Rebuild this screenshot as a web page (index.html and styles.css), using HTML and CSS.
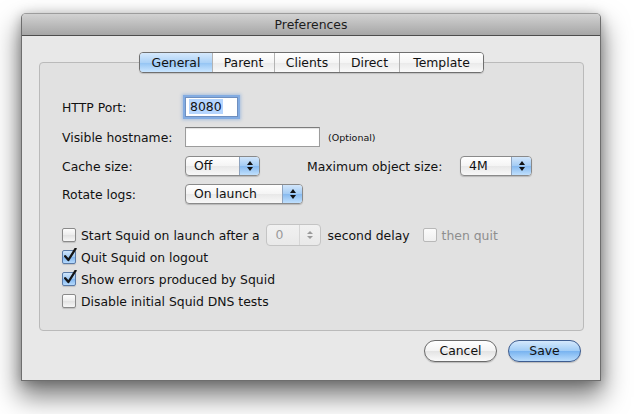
FILE: index.html
```html
<!DOCTYPE html>
<html>
<head>
<meta charset="utf-8">
<link rel="stylesheet" href="styles.css">
</head>
<body>
<div class="desk">
<div class="window">
  <div class="titlebar">Preferences</div>
  <div class="content">
    <div class="tabs">
      <div class="seg">
        <div class="tab sel t1">General</div>
        <div class="tab t2">Parent</div>
        <div class="tab t3">Clients</div>
        <div class="tab t4">Direct</div>
        <div class="tab t5">Template</div>
      </div>
    </div>
    <div class="group">
      <div class="form">
        <div class="row r1">
          <span class="lbl">HTTP Port:</span>
          <div class="field port"><span class="hl">8080</span></div>
        </div>
        <div class="row r2">
          <span class="lbl">Visible hostname:</span>
          <div class="field host"></div>
          <span class="opt">(Optional)</span>
        </div>
        <div class="row r3">
          <span class="lbl">Cache size:</span>
          <div class="popup p-cache"><span class="val">Off</span><span class="arr"><i class="up"></i><i class="dn"></i></span></div>
          <span class="lbl2">Maximum object size:</span>
          <div class="popup p-max"><span class="val">4M</span><span class="arr"><i class="up"></i><i class="dn"></i></span></div>
        </div>
        <div class="row r4">
          <span class="lbl">Rotate logs:</span>
          <div class="popup p-rot"><span class="val">On launch</span><span class="arr"><i class="up"></i><i class="dn"></i></span></div>
        </div>
      </div>
      <div class="checks">
        <div class="crow">
          <span class="cb"></span>
          <span>Start Squid on launch after a</span>
          <div class="stepper"><span class="sval">0</span><span class="sarr"><i class="up"></i><i class="dn"></i></span></div>
          <span class="after">second delay</span>
          <span class="cb dis"></span>
          <span class="distext">then quit</span>
        </div>
        <div class="crow">
          <span class="cb on"><svg viewBox="0 0 16 16" width="16" height="16"><path d="M3.2 8.2 L6.4 12 L13.6 0.6" fill="none" stroke="#151515" stroke-width="2.3" stroke-linecap="round" stroke-linejoin="round"/></svg></span>
          <span>Quit Squid on logout</span>
        </div>
        <div class="crow">
          <span class="cb on"><svg viewBox="0 0 16 16" width="16" height="16"><path d="M3.2 8.2 L6.4 12 L13.6 0.6" fill="none" stroke="#151515" stroke-width="2.3" stroke-linecap="round" stroke-linejoin="round"/></svg></span>
          <span>Show errors produced by Squid</span>
        </div>
        <div class="crow">
          <span class="cb"></span>
          <span>Disable initial Squid DNS tests</span>
        </div>
      </div>
    </div>
    <div class="buttons">
      <div class="btn">Cancel</div>
      <div class="btn def">Save</div>
    </div>
  </div>
</div>
</div>
</body>
</html>
```
FILE: styles.css
```css
html, body {
  margin: 0;
  padding: 0;
  background: #ffffff;
}
body {
  font-family: "Lucida Grande", "DejaVu Sans", sans-serif;
  font-size: 12.4px;
  color: #111;
}
.desk {
  width: 641px;
  height: 414px;
  box-sizing: border-box;
  padding: 13px 0 0 21px;
  overflow: hidden;
}
.window {
  position: relative;
  width: 580px;
  height: 368px;
  box-sizing: border-box;
  border: 1px solid #6e6e6e;
  border-top-color: #9c9c9c;
  border-radius: 5px 5px 0 0;
  background: #e8e8e8;
  box-shadow: 0 14px 26px 2px rgba(0,0,0,0.5), 0 2px 12px rgba(0,0,0,0.25);
}
.titlebar {
  height: 21px;
  line-height: 22px;
  border-bottom: 1px solid #4d4d4d;
  background: linear-gradient(#d2d2d2, #a6a6a6);
  border-radius: 4px 4px 0 0;
  text-align: center;
  color: #1c1c1c;
}
.content {
  padding: 16px 16px 0 17px;
}
.tabs {
  display: flex;
  justify-content: center;
  position: relative;
  z-index: 1;
}
.seg {
  display: flex;
  height: 19px;
  border: 1px solid #6f6f6f;
  border-radius: 4px;
  overflow: hidden;
  box-shadow: 0 1px 1px rgba(0,0,0,0.15);
}
.tab {
  box-sizing: border-box;
  line-height: 19px;
  text-align: center;
  border-left: 1px solid #b3b3b3;
  background: linear-gradient(#ffffff, #f5f5f5 50%, #e9e9e9 51%, #f9f9f9);
}
.tab.sel {
  background: linear-gradient(#d6e9fc, #acd2f7 50%, #92c3f3 51%, #cbe6ff);
}
.t1 { width: 72px; border-left: 0; }
.t2 { width: 62px; }
.t3 { width: 65px; }
.t4 { width: 60px; }
.t5 { width: 84px; }
.group {
  margin-top: -11px;
  height: 269px;
  box-sizing: border-box;
  border: 1px solid #bababa;
  border-radius: 4px;
  background: #e1e1e1;
  padding: 29px 0 0 22px;
}
.row {
  display: flex;
  align-items: center;
}
.r1, .r2 { height: 30px; }
.r3, .r4 { height: 28px; }
.lbl { width: 123px; }
.lbl2 { width: 153px; margin-left: 47px; }
.field {
  height: 20px;
  box-sizing: border-box;
  border: 1px solid #9c9c9c;
  border-top-color: #7c7c7c;
  background: #fff;
  box-shadow: inset 0 1px 1px rgba(0,0,0,0.12);
}
.port {
  width: 53px;
  padding-left: 3px;
  line-height: 18px;
  box-shadow: 0 0 0 2px #83ace2, 0 0 3px 3px rgba(100,150,220,0.45);
  border-color: #6f8fbf;
}
.hl {
  background: #b5d5fe;
  padding: 0 1px;
}
.host { width: 135px; }
.opt {
  margin-left: 8px;
  font-size: 9.5px;
}
.popup {
  display: flex;
  height: 20px;
  box-sizing: border-box;
  border: 1px solid #8a8a8a;
  border-radius: 4px;
  overflow: hidden;
  background: linear-gradient(#ffffff, #f4f4f4 50%, #e8e8e8 51%, #f8f8f8);
  box-shadow: 0 1px 1px rgba(0,0,0,0.18);
}
.popup .val {
  flex: 1;
  padding-left: 8px;
  line-height: 18px;
}
.popup .arr {
  width: 19px;
  border-left: 1px solid #8ea3be;
  background: linear-gradient(#d2e6fb, #a2cbf4 50%, #86b9ef 51%, #c0e0fd);
  display: flex;
  flex-direction: column;
  align-items: center;
  justify-content: center;
  gap: 2px;
}
.up, .dn {
  display: block;
  width: 0;
  height: 0;
  border-left: 3.5px solid transparent;
  border-right: 3.5px solid transparent;
}
.up { border-bottom: 4px solid #111; }
.dn { border-top: 4px solid #111; }
.p-cache { width: 75px; }
.p-max { width: 72px; }
.p-rot { width: 118px; }
.checks {
  margin-top: 16px;
}
.crow {
  display: flex;
  align-items: center;
  height: 22px;
}
.cb {
  position: relative;
  width: 14px;
  height: 14px;
  box-sizing: border-box;
  border: 1px solid #8a8a8a;
  border-radius: 2px;
  background: linear-gradient(#fdfdfd, #ececec 50%, #e2e2e2 51%, #f6f6f6);
  box-shadow: 0 1px 1px rgba(0,0,0,0.15);
  margin-right: 5px;
  flex: none;
}
.cb.on {
  border-color: #5a7aa6;
  background: linear-gradient(#cfe5fb, #9fc9f3 50%, #7fb4ee 51%, #b6dafc);
}
.cb svg {
  position: absolute;
  left: -1px;
  top: -3px;
}
.cb.dis {
  border-color: #b8b8b8;
  background: linear-gradient(#fbfbfb, #efefef);
  box-shadow: none;
  margin-left: 13px;
}
.distext { color: #8e8e8e; }
.stepper {
  display: flex;
  width: 55px;
  height: 22px;
  box-sizing: border-box;
  margin-left: 6px;
  border: 1px solid #c4c4c4;
  border-radius: 4px;
  background: linear-gradient(#f1f1f1, #e9e9e9);
}
.sval {
  flex: 1;
  padding-left: 9px;
  line-height: 20px;
  color: #9a9a9a;
}
.sarr {
  width: 20px;
  border-left: 1px solid #d6d6d6;
  display: flex;
  flex-direction: column;
  align-items: center;
  justify-content: center;
  gap: 2px;
}
.sarr .up { border-bottom-color: #9a9a9a; border-bottom-width: 3.5px; }
.sarr .dn { border-top-color: #9a9a9a; border-top-width: 3.5px; }
.after { margin-left: 7px; }
.buttons {
  display: flex;
  justify-content: flex-end;
  gap: 11px;
  margin-top: 9px;
  padding-right: 3px;
}
.btn {
  width: 73px;
  height: 22px;
  box-sizing: border-box;
  border: 1px solid #6a6a6a;
  border-radius: 11px;
  text-align: center;
  line-height: 20px;
  background: linear-gradient(#ffffff, #f3f3f3 50%, #e3e3e3 51%, #fafafa);
  box-shadow: 0 1px 1px rgba(0,0,0,0.2);
}
.btn.def {
  border-color: #3d5c8f;
  background: linear-gradient(#d4e8fc, #a0ccf6 50%, #78b3f0 51%, #b9dcfc);
}
```
